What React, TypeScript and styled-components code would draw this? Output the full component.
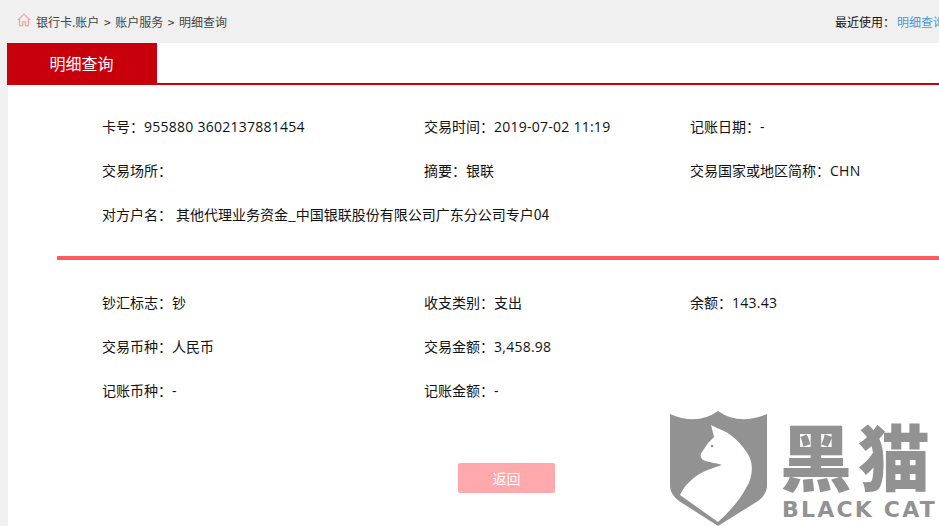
import React from "react";
import styled, { createGlobalStyle } from "styled-components";

const GlobalStyle = createGlobalStyle`
  html, body {
    margin: 0;
    padding: 0;
    background: #f0f0f0;
  }
  body {
    width: 939px;
    height: 526px;
    overflow: hidden;
    font-family: "Noto Sans CJK SC", "Liberation Sans", sans-serif;
    font-size: 14px;
    color: #111;
  }
`;

const Page = styled.div`
  position: relative;
  width: 939px;
  height: 526px;
  overflow: hidden;
`;

const TopBar = styled.div`
  display: flex;
  align-items: center;
  justify-content: space-between;
  height: 43px;
  padding: 0 0 1px 17px;
  box-sizing: border-box;
  font-size: 12px;
  white-space: nowrap;
`;

const Crumbs = styled.div`
  display: flex;
  align-items: center;
  color: #444;
`;

const HomeIcon = styled.svg`
  width: 14px;
  height: 14px;
  margin: -3px 5px 0 0;
  fill: none;
  stroke: #f79a9a;
  stroke-width: 1.1;
`;

const Sep = styled.span`
  margin: 0 4.6px;
  color: #333;
`;

const Recent = styled.div`
  display: flex;
  width: 104px;
  overflow: hidden;
  color: #111;
`;

const RecentLink = styled.a`
  margin-left: 2px;
  color: #4a98d8;
`;

const TabRow = styled.div`
  height: 40px;
  margin-left: 7px;
  background: #fff;
  border-bottom: 2px solid #c8000b;
`;

const Tab = styled.div`
  display: flex;
  align-items: center;
  justify-content: center;
  width: 150px;
  height: 42px;
  padding-bottom: 2px;
  padding-right: 1px;
  box-sizing: border-box;
  background: #c8000b;
  color: #fff;
  font-size: 16px;
`;

const Content = styled.div`
  height: 441px;
  margin-left: 8px;
  padding-top: 19px;
  background: #fff;
`;

const Grid = styled.div`
  display: grid;
  grid-template-columns: 322px 266px 1fr;
  grid-auto-rows: 44px;
  padding-left: 94px;
  color: #111;
`;

const Cell = styled.div<{ $wide?: boolean }>`
  display: flex;
  align-items: center;
  white-space: nowrap;
  grid-column: ${(p) => (p.$wide ? "1 / -1" : "auto")};
`;

const Value = styled.span<{ $gap?: number; $num?: boolean }>`
  margin-left: ${(p) => p.$gap ?? 0}px;
  font-family: ${(p) => (p.$num ? '"Open Sans", sans-serif' : "inherit")};
  letter-spacing: ${(p) => (p.$num ? "0.25px" : "normal")};
`;

const Divider = styled.div`
  height: 4px;
  margin: 20px 0 20px 49px;
  background: #ff5a60;
`;

const Actions = styled.div`
  display: flex;
  padding: 51px 0 0 450px;
`;

const BackButton = styled.button`
  width: 97px;
  height: 30px;
  padding: 0;
  border: none;
  border-radius: 2px;
  background: #ffa9ac;
  color: #fff;
  font: inherit;
  font-size: 14px;
`;

const Watermark = styled.div`
  position: absolute;
  left: 670px;
  top: 411px;
  display: flex;
  gap: 12px;
  color: #929292;
`;

const Shield = styled.svg`
  width: 98px;
  height: 115px;
  flex: none;
`;

const Brand = styled.div`
  display: flex;
  flex-direction: column;
  align-items: flex-start;
  padding-top: 7px;
`;

const BrandCn = styled.div`
  font-size: 72px;
  line-height: 72px;
  font-weight: 900;
  letter-spacing: 6px;
  white-space: nowrap;
`;

const BrandEn = styled.div`
  margin: 7px 0 0 2px;
  font-family: "DejaVu Sans", sans-serif;
  font-size: 22px;
  line-height: 26px;
  font-weight: 700;
  letter-spacing: 2.2px;
  white-space: nowrap;
`;

type Item = { label: string; value: string };

const topRows: Item[] = [
  { label: "卡号：", value: "955880 3602137881454" },
  { label: "交易时间：", value: "2019-07-02 11:19" },
  { label: "记账日期：", value: "-" },
  { label: "交易场所：", value: "" },
  { label: "摘要：", value: "银联" },
  { label: "交易国家或地区简称：", value: "CHN" },
];

const bottomRows: Item[] = [
  { label: "钞汇标志：", value: "钞" },
  { label: "收支类别：", value: "支出" },
  { label: "余额：", value: "143.43" },
  { label: "交易币种：", value: "人民币" },
  { label: "交易金额：", value: "3,458.98" },
  { label: "", value: "" },
  { label: "记账币种：", value: "-" },
  { label: "记账金额：", value: "-" },
];

function renderCells(items: Item[]) {
  return items.map((item, i) => (
    <Cell key={i}>
      {item.label}
      <Value $num={/^[\x20-\x7e]+$/.test(item.value)}>{item.value}</Value>
    </Cell>
  ));
}

export default function App() {
  return (
    <Page>
      <GlobalStyle />
      <TopBar>
        <Crumbs>
          <HomeIcon viewBox="0 0 14 14">
            <path d="M0.8 7.2 7 1.2l6.2 6M2.6 6v6.8h3v-4h2.8v4h3V6" />
          </HomeIcon>
          银行卡.账户
          <Sep>&gt;</Sep>
          账户服务
          <Sep>&gt;</Sep>
          明细查询
        </Crumbs>
        <Recent>
          最近使用：
          <RecentLink>明细查询</RecentLink>
        </Recent>
      </TopBar>
      <TabRow>
        <Tab>明细查询</Tab>
      </TabRow>
      <Content>
        <Grid>
          {renderCells(topRows)}
          <Cell $wide>
            对方户名：
            <Value $gap={4}>其他代理业务资金_中国银联股份有限公司广东分公司专户04</Value>
          </Cell>
        </Grid>
        <Divider />
        <Grid>{renderCells(bottomRows)}</Grid>
        <Actions>
          <BackButton>返回</BackButton>
        </Actions>
      </Content>
      <Watermark>
        <Shield viewBox="0 0 98 115">
          <path
            fill="#929292"
            d="M0 3Q27 15 48 0 69 15 97 3V76Q96 84 88 90L48 115 9 90Q1 84 0 76Z"
          />
          <path
            fill="#fff"
            d="M41 14 47 17C62 22 72 33 79 45 84 55 82 68 76 77 70 89 58 102 48 111L10 84C14 75 22 67 33 61 39 58 46 56 52 54 47 52 40 52 33 49 30 46 30 43 32 41L38 32 44 26Z"
          />
          <circle cx="42" cy="35" r="1.3" fill="#929292" />
        </Shield>
        <Brand>
          <BrandCn>黑猫</BrandCn>
          <BrandEn>BLACK CAT</BrandEn>
        </Brand>
      </Watermark>
    </Page>
  );
}
